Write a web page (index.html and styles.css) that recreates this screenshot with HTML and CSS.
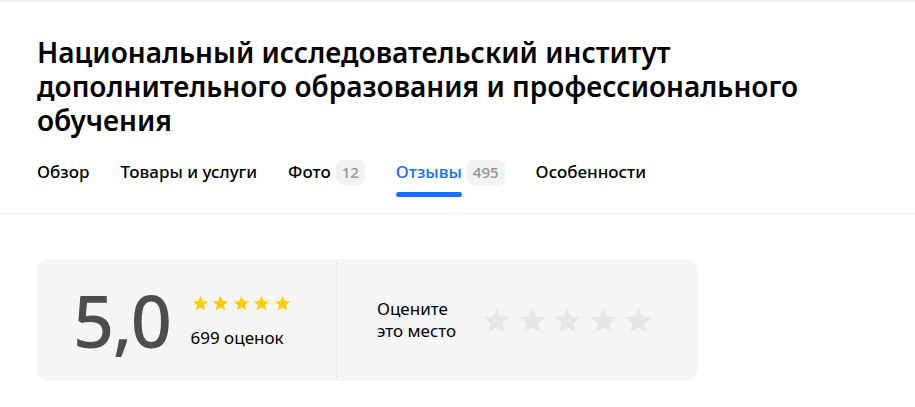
FILE: index.html
```html
<!DOCTYPE html>
<html lang="ru">
<head>
<meta charset="utf-8">
<link rel="stylesheet" href="styles.css">
</head>
<body>
<div class="topshade"></div>
<header class="head">
  <h1 class="title">Национальный исследовательский институт дополнительного образования и профессионального обучения</h1>
  <nav class="tabs">
    <div class="tab">Обзор</div>
    <div class="tab">Товары и услуги</div>
    <div class="tab">Фото <span class="count">12</span></div>
    <div class="tab active"><span class="tab-label">Отзывы</span> <span class="count">495</span></div>
    <div class="tab">Особенности</div>
  </nav>
</header>
<main class="content">
  <section class="rating-card">
    <div class="summary">
      <div class="score">5,0</div>
      <div class="summary-side">
        <div class="stars-small">
          <svg viewBox="0 0 24 24" class="star-s"><path d="M12 1.5l3.1 7.1 7.7.6-5.9 5 1.8 7.5L12 17.7l-6.7 4 1.8-7.5-5.9-5 7.7-.6z"/></svg>
          <svg viewBox="0 0 24 24" class="star-s"><path d="M12 1.5l3.1 7.1 7.7.6-5.9 5 1.8 7.5L12 17.7l-6.7 4 1.8-7.5-5.9-5 7.7-.6z"/></svg>
          <svg viewBox="0 0 24 24" class="star-s"><path d="M12 1.5l3.1 7.1 7.7.6-5.9 5 1.8 7.5L12 17.7l-6.7 4 1.8-7.5-5.9-5 7.7-.6z"/></svg>
          <svg viewBox="0 0 24 24" class="star-s"><path d="M12 1.5l3.1 7.1 7.7.6-5.9 5 1.8 7.5L12 17.7l-6.7 4 1.8-7.5-5.9-5 7.7-.6z"/></svg>
          <svg viewBox="0 0 24 24" class="star-s"><path d="M12 1.5l3.1 7.1 7.7.6-5.9 5 1.8 7.5L12 17.7l-6.7 4 1.8-7.5-5.9-5 7.7-.6z"/></svg>
        </div>
        <div class="votes">699 оценок</div>
      </div>
    </div>
    <div class="rate">
      <div class="rate-label"><div class="rate-line">Оцените</div><div class="rate-line">это место</div></div>
      <div class="stars-big">
        <svg viewBox="0 0 24 24" class="star-b"><path d="M12 1.5l3.1 7.1 7.7.6-5.9 5 1.8 7.5L12 17.7l-6.7 4 1.8-7.5-5.9-5 7.7-.6z"/></svg>
        <svg viewBox="0 0 24 24" class="star-b"><path d="M12 1.5l3.1 7.1 7.7.6-5.9 5 1.8 7.5L12 17.7l-6.7 4 1.8-7.5-5.9-5 7.7-.6z"/></svg>
        <svg viewBox="0 0 24 24" class="star-b"><path d="M12 1.5l3.1 7.1 7.7.6-5.9 5 1.8 7.5L12 17.7l-6.7 4 1.8-7.5-5.9-5 7.7-.6z"/></svg>
        <svg viewBox="0 0 24 24" class="star-b"><path d="M12 1.5l3.1 7.1 7.7.6-5.9 5 1.8 7.5L12 17.7l-6.7 4 1.8-7.5-5.9-5 7.7-.6z"/></svg>
        <svg viewBox="0 0 24 24" class="star-b"><path d="M12 1.5l3.1 7.1 7.7.6-5.9 5 1.8 7.5L12 17.7l-6.7 4 1.8-7.5-5.9-5 7.7-.6z"/></svg>
      </div>
    </div>
  </section>
</main>
</body>
</html>
```

FILE: styles.css
```css
* { box-sizing: border-box; }
html, body { margin: 0; padding: 0; background: #fff; }
body {
  font-family: "Noto Sans", "Open Sans", sans-serif;
  color: #000;
  overflow: hidden;
}
.topshade {
  height: 3px;
  background: linear-gradient(#e6e6e6, #fff);
}
.head {
  padding: 32px 37px 0;
  border-bottom: 1px solid #ebebeb;
}
.title {
  margin: 0;
  font-size: 28px;
  line-height: 34px;
  font-weight: 600;
  max-width: 820px;
}
.tabs {
  display: flex;
  gap: 31px;
  margin-top: 23px;
  height: 53px;
}
.tab {
  display: flex;
  align-items: flex-start;
  gap: 5px;
  font-size: 17px;
  line-height: 24px;
  font-weight: 500;
  height: 53px;
}
.tab.active { color: #196dff; }
.tab.active .tab-label { position: relative; }
.tab.active .tab-label::after {
  content: "";
  position: absolute;
  left: 0;
  right: 0;
  top: 32px;
  height: 5px;
  border-radius: 3px;
  background: #196dff;
}
.count {
  display: inline-block;
  background: #f2f2f2;
  color: #929292;
  border-radius: 7px;
  font-size: 15px;
  line-height: 25px;
  padding: 0 6px;
  font-weight: 500;
}
.content {
  padding: 45px 37px 0;
}
.rating-card {
  width: 661px;
  height: 122px;
  background: #f5f5f5;
  border-radius: 12px;
  display: flex;
}
.summary {
  width: 300px;
  border-right: 1px solid #ebebeb;
  display: flex;
  align-items: center;
  padding-left: 36px;
  gap: 22px;
}
.score {
  font-size: 72px;
  line-height: 72px;
  color: #4d4d4d;
  font-weight: 500;
  letter-spacing: -1.5px;
}
.summary-side {
  display: flex;
  flex-direction: column;
  gap: 16px;
  padding-top: 2px;
}
.stars-small { display: flex; gap: 3.5px; margin-left: -1px; }
.star-s { width: 17px; height: 17px; fill: #fc0; }
.votes { font-size: 17px; line-height: 20px; margin-left: -2px; }
.rate {
  flex: 1;
  display: flex;
  align-items: center;
  padding-left: 40px;
  gap: 26px;
}
.rate-label {
  display: flex;
  flex-direction: column;
  font-size: 17px;
  line-height: 22px;
}
.stars-big { display: flex; gap: 6.5px; }
.star-b { width: 29px; height: 29px; fill: #e6e6e6; }
```
